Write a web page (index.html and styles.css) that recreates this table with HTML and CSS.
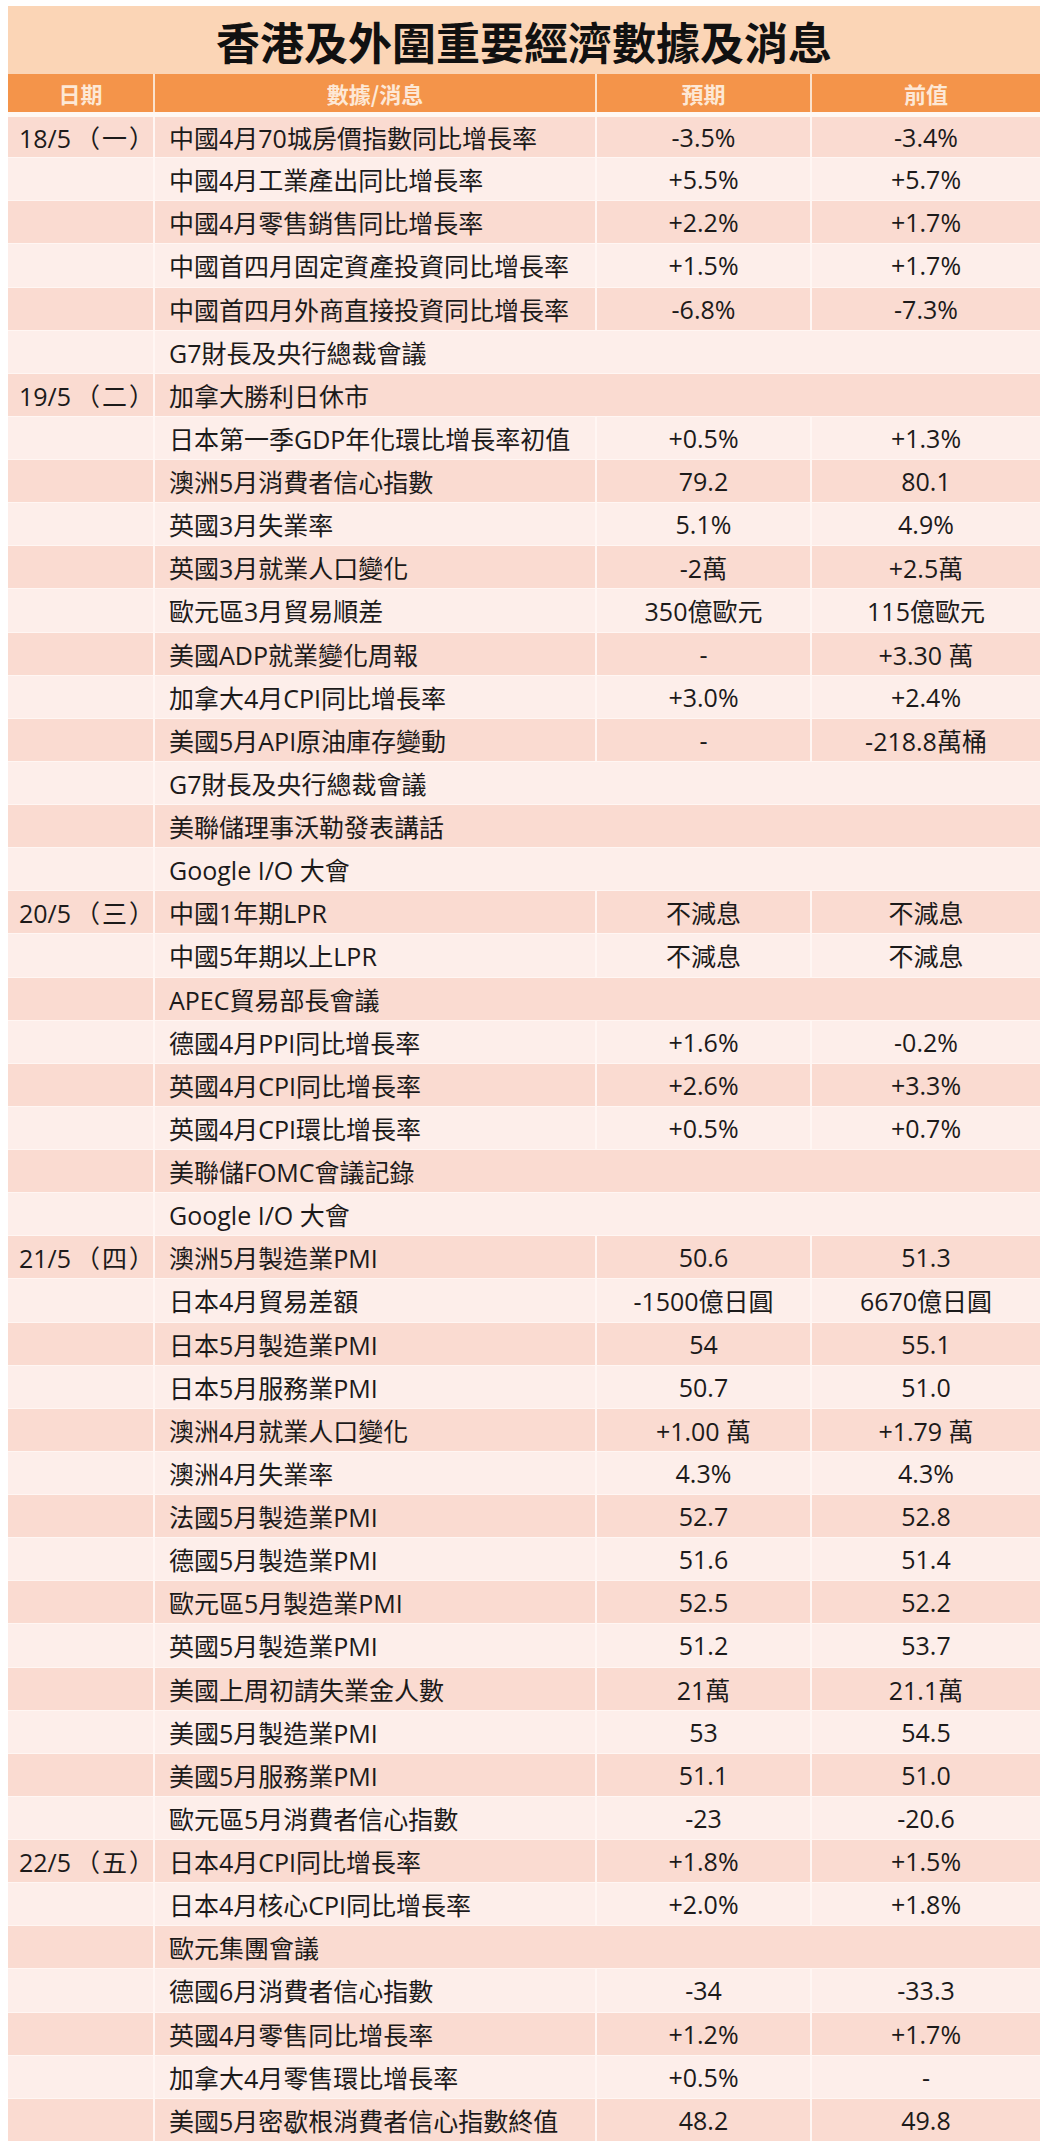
FILE: index.html
```html
<!DOCTYPE html>
<html lang="zh-Hant">
<head>
<meta charset="utf-8">
<title>香港及外圍重要經濟數據及消息</title>
<link rel="stylesheet" href="styles.css">
</head>
<body>
<div class="page">
  <div class="title">香港及外圍重要經濟數據及消息</div>
  <table class="data">
    <colgroup>
      <col class="c-date"><col class="c-item"><col class="c-exp"><col class="c-prev">
    </colgroup>
    <thead>
      <tr><th>日期</th><th>數據/消息</th><th>預期</th><th>前值</th></tr>
    </thead>
    <tbody>
      <tr><td class="date">18/5<span class="wd">（一）</span></td><td class="item">中國4月70城房價指數同比增長率</td><td class="num">-3.5%</td><td class="num">-3.4%</td></tr>
      <tr><td class="date"></td><td class="item">中國4月工業產出同比增長率</td><td class="num">+5.5%</td><td class="num">+5.7%</td></tr>
      <tr><td class="date"></td><td class="item">中國4月零售銷售同比增長率</td><td class="num">+2.2%</td><td class="num">+1.7%</td></tr>
      <tr><td class="date"></td><td class="item">中國首四月固定資產投資同比增長率</td><td class="num">+1.5%</td><td class="num">+1.7%</td></tr>
      <tr><td class="date"></td><td class="item">中國首四月外商直接投資同比增長率</td><td class="num">-6.8%</td><td class="num">-7.3%</td></tr>
      <tr><td class="date"></td><td class="item" colspan="3">G7財長及央行總裁會議</td></tr>
      <tr><td class="date">19/5<span class="wd">（二）</span></td><td class="item" colspan="3">加拿大勝利日休市</td></tr>
      <tr><td class="date"></td><td class="item">日本第一季GDP年化環比增長率初值</td><td class="num">+0.5%</td><td class="num">+1.3%</td></tr>
      <tr><td class="date"></td><td class="item">澳洲5月消費者信心指數</td><td class="num">79.2</td><td class="num">80.1</td></tr>
      <tr><td class="date"></td><td class="item">英國3月失業率</td><td class="num">5.1%</td><td class="num">4.9%</td></tr>
      <tr><td class="date"></td><td class="item">英國3月就業人口變化</td><td class="num">-2萬</td><td class="num">+2.5萬</td></tr>
      <tr><td class="date"></td><td class="item">歐元區3月貿易順差</td><td class="num">350億歐元</td><td class="num">115億歐元</td></tr>
      <tr><td class="date"></td><td class="item">美國ADP就業變化周報</td><td class="num">-</td><td class="num">+3.30 萬</td></tr>
      <tr><td class="date"></td><td class="item">加拿大4月CPI同比增長率</td><td class="num">+3.0%</td><td class="num">+2.4%</td></tr>
      <tr><td class="date"></td><td class="item">美國5月API原油庫存變動</td><td class="num">-</td><td class="num">-218.8萬桶</td></tr>
      <tr><td class="date"></td><td class="item" colspan="3">G7財長及央行總裁會議</td></tr>
      <tr><td class="date"></td><td class="item" colspan="3">美聯儲理事沃勒發表講話</td></tr>
      <tr><td class="date"></td><td class="item" colspan="3">Google I/O 大會</td></tr>
      <tr><td class="date">20/5<span class="wd">（三）</span></td><td class="item">中國1年期LPR</td><td class="num">不減息</td><td class="num">不減息</td></tr>
      <tr><td class="date"></td><td class="item">中國5年期以上LPR</td><td class="num">不減息</td><td class="num">不減息</td></tr>
      <tr><td class="date"></td><td class="item" colspan="3">APEC貿易部長會議</td></tr>
      <tr><td class="date"></td><td class="item">德國4月PPI同比增長率</td><td class="num">+1.6%</td><td class="num">-0.2%</td></tr>
      <tr><td class="date"></td><td class="item">英國4月CPI同比增長率</td><td class="num">+2.6%</td><td class="num">+3.3%</td></tr>
      <tr><td class="date"></td><td class="item">英國4月CPI環比增長率</td><td class="num">+0.5%</td><td class="num">+0.7%</td></tr>
      <tr><td class="date"></td><td class="item" colspan="3">美聯儲FOMC會議記錄</td></tr>
      <tr><td class="date"></td><td class="item" colspan="3">Google I/O 大會</td></tr>
      <tr><td class="date">21/5<span class="wd">（四）</span></td><td class="item">澳洲5月製造業PMI</td><td class="num">50.6</td><td class="num">51.3</td></tr>
      <tr><td class="date"></td><td class="item">日本4月貿易差額</td><td class="num">-1500億日圓</td><td class="num">6670億日圓</td></tr>
      <tr><td class="date"></td><td class="item">日本5月製造業PMI</td><td class="num">54</td><td class="num">55.1</td></tr>
      <tr><td class="date"></td><td class="item">日本5月服務業PMI</td><td class="num">50.7</td><td class="num">51.0</td></tr>
      <tr><td class="date"></td><td class="item">澳洲4月就業人口變化</td><td class="num">+1.00 萬</td><td class="num">+1.79 萬</td></tr>
      <tr><td class="date"></td><td class="item">澳洲4月失業率</td><td class="num">4.3%</td><td class="num">4.3%</td></tr>
      <tr><td class="date"></td><td class="item">法國5月製造業PMI</td><td class="num">52.7</td><td class="num">52.8</td></tr>
      <tr><td class="date"></td><td class="item">德國5月製造業PMI</td><td class="num">51.6</td><td class="num">51.4</td></tr>
      <tr><td class="date"></td><td class="item">歐元區5月製造業PMI</td><td class="num">52.5</td><td class="num">52.2</td></tr>
      <tr><td class="date"></td><td class="item">英國5月製造業PMI</td><td class="num">51.2</td><td class="num">53.7</td></tr>
      <tr><td class="date"></td><td class="item">美國上周初請失業金人數</td><td class="num">21萬</td><td class="num">21.1萬</td></tr>
      <tr><td class="date"></td><td class="item">美國5月製造業PMI</td><td class="num">53</td><td class="num">54.5</td></tr>
      <tr><td class="date"></td><td class="item">美國5月服務業PMI</td><td class="num">51.1</td><td class="num">51.0</td></tr>
      <tr><td class="date"></td><td class="item">歐元區5月消費者信心指數</td><td class="num">-23</td><td class="num">-20.6</td></tr>
      <tr><td class="date">22/5<span class="wd">（五）</span></td><td class="item">日本4月CPI同比增長率</td><td class="num">+1.8%</td><td class="num">+1.5%</td></tr>
      <tr><td class="date"></td><td class="item">日本4月核心CPI同比增長率</td><td class="num">+2.0%</td><td class="num">+1.8%</td></tr>
      <tr><td class="date"></td><td class="item" colspan="3">歐元集團會議</td></tr>
      <tr><td class="date"></td><td class="item">德國6月消費者信心指數</td><td class="num">-34</td><td class="num">-33.3</td></tr>
      <tr><td class="date"></td><td class="item">英國4月零售同比增長率</td><td class="num">+1.2%</td><td class="num">+1.7%</td></tr>
      <tr><td class="date"></td><td class="item">加拿大4月零售環比增長率</td><td class="num">+0.5%</td><td class="num">-</td></tr>
      <tr><td class="date"></td><td class="item">美國5月密歇根消費者信心指數終值</td><td class="num">48.2</td><td class="num">49.8</td></tr>
    </tbody>
  </table>
</div>
</body>
</html>
```

FILE: styles.css
```css
html, body {
  margin: 0;
  padding: 0;
  background: #ffffff;
}

.page {
  padding: 6px 9px 0 8px;
  width: 1032px;
  font-family: "Open Sans", "Noto Sans CJK TC", sans-serif;
  color: #1c1a1a;
}

.title {
  height: 68px;
  background: #fbd5b6;
  display: flex;
  align-items: center;
  justify-content: center;
  font-family: "Noto Sans CJK TC", sans-serif;
  font-weight: 700;
  font-size: 44px;
  color: #111111;
  padding-top: 2px;
  box-sizing: border-box;
}

.data {
  width: 1032px;
  border-collapse: collapse;
  table-layout: fixed;
}

.c-date { width: 146px; }
.c-item { width: 442px; }
.c-exp { width: 215px; }
.c-prev { width: 229px; }

.data th {
  height: 38px;
  padding: 0;
  background: #f4944a;
  color: #fde8d6;
  font-family: "Noto Sans CJK TC", sans-serif;
  font-weight: 700;
  font-size: 22px;
  text-align: center;
  border-left: 2px solid #fbe2cc;
  border-bottom: 5px solid #fff8f4;
}

.data th:first-child { border-left: none; }

.data td {
  height: 43.13px;
  padding: 0;
  font-size: 25px;
  white-space: nowrap;
  border-top: 1px solid #fff6f3;
  border-left: 2px solid #fff6f3;
  box-sizing: border-box;
}

.data td:first-child { border-left: none; }

.data tbody tr:nth-child(odd) td { background: #fadbd1; }
.data tbody tr:nth-child(even) td { background: #fdeeea; }

.data td.date {
  padding-left: 11px;
}

.data td.date .wd {
  margin-left: 4px;
  letter-spacing: 2px;
}

.data td.item {
  padding-left: 14px;
}

.data td.num {
  text-align: center;
}
```
